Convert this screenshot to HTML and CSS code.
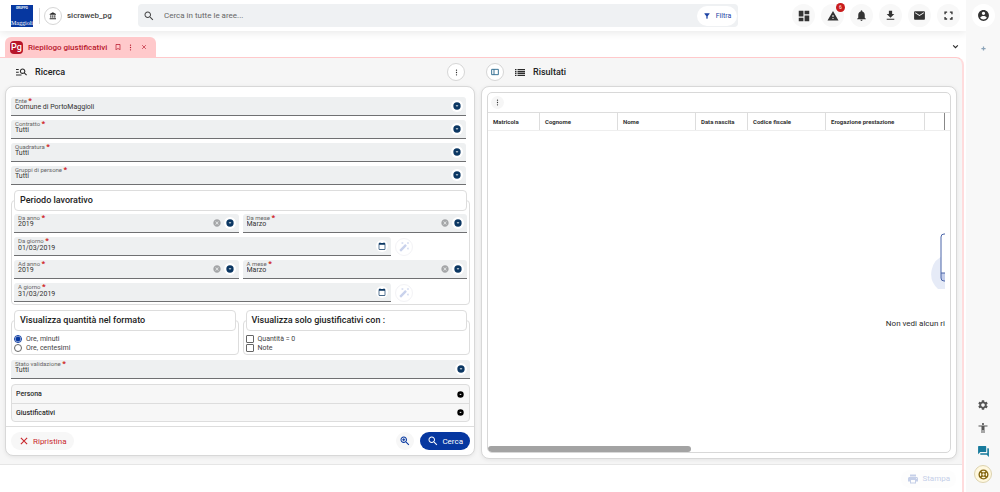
FILE: index.html
```html
<!DOCTYPE html>
<html lang="it">
<head>
<meta charset="utf-8">
<meta name="viewport" content="width=device-width, initial-scale=1">
<title>Riepilogo giustificativi</title>
<link rel="stylesheet" href="styles.css">
</head>
<body>
<svg class="sprite" aria-hidden="true">
  <symbol id="i-search" viewBox="0 0 24 24"><path d="M15.5 14h-.79l-.28-.27C15.41 12.59 16 11.11 16 9.5 16 5.91 13.09 3 9.5 3S3 5.91 3 9.5 5.91 16 9.5 16c1.61 0 3.09-.59 4.23-1.57l.27.28v.79l5 4.99L20.49 19l-4.99-5zm-6 0C7.01 14 5 11.99 5 9.5S7.01 5 9.5 5 14 7.01 14 9.5 11.99 14 9.5 14z"/></symbol>
  <symbol id="i-zoom" viewBox="0 0 24 24"><path d="M15.5 14h-.79l-.28-.27C15.41 12.59 16 11.11 16 9.5 16 5.91 13.09 3 9.5 3S3 5.91 3 9.5 5.91 16 9.5 16c1.61 0 3.09-.59 4.23-1.57l.27.28v.79l5 4.99L20.49 19l-4.99-5zm-6 0C7.01 14 5 11.99 5 9.5S7.01 5 9.5 5 14 7.01 14 9.5 11.99 14 9.5 14zM12.5 10.5h-2v2h-2v-2h-2v-2h2v-2h2v2h2z"/></symbol>
  <symbol id="i-bank" viewBox="0 0 24 24"><path d="M4 10v7h3v-7H4zm6 0v7h3v-7h-3zM2 22h19v-3H2v3zm14-12v7h3v-7h-3zm-4.500-9L2 6v2h19V6l-9.500-5z"/></symbol>
  <symbol id="i-filter" viewBox="0 0 24 24"><path d="M4.250 5.610C6.270 8.200 10 13 10 13v6c0 .55.45 1 1 1h2c.55 0 1-.45 1-1v-6s3.720-4.800 5.740-7.390A1 1 0 0 0 18.950 4H5.040c-.83 0-1.300.95-.79 1.610z"/></symbol>
  <symbol id="i-dashboard" viewBox="0 0 24 24"><path d="M3 13h8V3H3v10zm0 8h8v-6H3v6zm10 0h8V11h-8v10zm0-18v6h8V3h-8z"/></symbol>
  <symbol id="i-warning" viewBox="0 0 24 24"><path d="M1 21h22L12 2 1 21zm12-3h-2v-2h2v2zm0-4h-2v-4h2v4z"/></symbol>
  <symbol id="i-bell" viewBox="0 0 24 24"><path d="M12 22c1.1 0 2-.9 2-2h-4c0 1.1.89 2 2 2zm6-6v-5c0-3.07-1.64-5.64-4.5-6.32V4c0-.83-.67-1.5-1.5-1.5s-1.5.67-1.5 1.5v.68C7.63 5.36 6 7.92 6 11v5l-2 2v1h16v-1l-2-2z"/></symbol>
  <symbol id="i-download" viewBox="0 0 24 24"><path d="M19 9h-4V3H9v6H5l7 7 7-7zM5 18v2h14v-2H5z"/></symbol>
  <symbol id="i-mail" viewBox="0 0 24 24"><path d="M20 4H4c-1.1 0-1.99.9-1.99 2L2 18c0 1.1.9 2 2 2h16c1.1 0 2-.9 2-2V6c0-1.1-.9-2-2-2zm0 4l-8 5-8-5V6l8 5 8-5v2z"/></symbol>
  <symbol id="i-full" viewBox="0 0 24 24"><path d="M6 15H3v6h6v-3H6v-3zM3 9h3V6h3V3H3v6zm15 9h-3v3h6v-6h-3v3zM15 3v3h3v3h3V3h-6z"/></symbol>
  <symbol id="i-account" viewBox="0 0 24 24"><path d="M12 2C6.48 2 2 6.48 2 12s4.48 10 10 10 10-4.48 10-10S17.52 2 12 2zm0 3c1.66 0 3 1.34 3 3s-1.34 3-3 3-3-1.34-3-3 1.34-3 3-3zm0 14.200c-2.500 0-4.710-1.280-6-3.220.03-1.990 4-3.080 6-3.080 1.990 0 5.970 1.090 6 3.080-1.290 1.940-3.500 3.220-6 3.220z"/></symbol>
  <symbol id="i-bookmark" viewBox="0 0 24 24"><path d="M17 3H7c-1.100 0-1.990.9-1.990 2L5 21l7-3 7 3V5c0-1.100-.9-2-2-2zm0 15l-5-2.180L7 18V5h10v13z"/></symbol>
  <symbol id="i-dots" viewBox="0 0 24 24"><circle cx="12" cy="4" r="2.200"/><circle cx="12" cy="12" r="2.200"/><circle cx="12" cy="20" r="2.200"/></symbol>
  <symbol id="i-close" viewBox="0 0 24 24"><path d="M4.500 4.500l15 15m0-15l-15 15" fill="none" stroke="currentColor" stroke-width="2.600"/></symbol>
  <symbol id="i-chevron" viewBox="0 0 24 24"><path d="M4 8l8 8 8-8" fill="none" stroke="currentColor" stroke-width="4"/></symbol>
  <symbol id="i-plus" viewBox="0 0 24 24"><path d="M12 2v20M2 12h20" fill="none" stroke="currentColor" stroke-width="6"/></symbol>
  <symbol id="i-manage" viewBox="0 0 20 20"><path d="M5 5.500H0v-2h5v2zm0 3H0v2h5v-2zm13.590 7l-3.830-3.830c-.8.52-1.740.83-2.760.83-2.760 0-5-2.240-5-5s2.240-5 5-5 5 2.240 5 5c0 1.020-.31 1.960-.83 2.750L20 14.090l-1.410 1.410zM15 7.500c0-1.650-1.350-3-3-3s-3 1.350-3 3 1.350 3 3 3 3-1.350 3-3zM0 15.500h10v-2H0v2z"/></symbol>
  <symbol id="i-list" viewBox="0 0 20 14"><path d="M0 0h3v2.500H0zM5 0h15v2.500H5zM0 3.800h3v2.500H0zM5 3.800h15v2.500H5zM0 7.600h3v2.500H0zM5 7.600h15v2.500H5zM0 11.400h3v2.500H0zM5 11.400h15v2.500H5z"/></symbol>
  <symbol id="i-split" viewBox="0 0 24 24"><path d="M2 4h20v16H2zM9 4v16" fill="none" stroke="currentColor" stroke-width="2.600"/></symbol>
  <symbol id="i-gear" viewBox="0 0 24 24"><path d="M19.140 12.940c.04-.3.06-.61.06-.94 0-.32-.02-.64-.07-.94l2.030-1.580c.18-.14.23-.41.12-.61l-1.920-3.320c-.12-.22-.37-.29-.59-.22l-2.390.96c-.5-.38-1.030-.7-1.620-.94l-.36-2.540c-.04-.24-.24-.41-.48-.41h-3.840c-.24 0-.43.17-.47.41l-.36 2.540c-.59.24-1.130.57-1.620.94l-2.390-.96c-.22-.08-.47 0-.59.22L2.740 8.870c-.12.21-.08.47.12.61l2.030 1.580c-.05.3-.09.63-.09.94s.02.64.07.94l-2.030 1.580c-.18.14-.23.41-.12.61l1.920 3.320c.12.22.37.29.59.22l2.390-.96c.5.38 1.030.7 1.620.94l.36 2.540c.05.24.24.41.48.41h3.840c.24 0 .44-.17.47-.41l.36-2.540c.59-.24 1.130-.56 1.620-.94l2.390.96c.22.08.47 0 .59-.22l1.920-3.320c.12-.22.07-.47-.12-.61l-2.010-1.580zM12 15.600c-1.980 0-3.600-1.620-3.600-3.600s1.620-3.600 3.600-3.600 3.600 1.620 3.600 3.600-1.620 3.600-3.600 3.600z"/></symbol>
  <symbol id="i-person" viewBox="0 0 24 24"><path d="M12 2c1.100 0 2 .9 2 2s-.9 2-2 2-2-.9-2-2 .9-2 2-2zm9 7h-6v13h-2v-6h-2v6H9V9H3V7h18v2z"/></symbol>
  <symbol id="i-forum" viewBox="0 0 24 24"><path d="M21 6h-2v9H6v2c0 .55.45 1 1 1h11l4 4V7c0-.55-.45-1-1-1zm-4 6V3c0-.55-.45-1-1-1H3c-.55 0-1 .45-1 1v14l4-4h10c.55 0 1-.45 1-1z"/></symbol>
  <symbol id="i-help" viewBox="0 0 24 24"><g fill="none" stroke="currentColor"><circle cx="12" cy="12" r="9.500" stroke-width="3"/><circle cx="12" cy="12" r="3.800" stroke-width="2.500"/><path d="M5 5l4.500 4.500M19 5l-4.500 4.500M5 19l4.500-4.500M19 19l-4.500-4.500" stroke-width="4"/></g></symbol>
  <symbol id="i-print" viewBox="0 0 24 24"><path d="M19 8H5c-1.660 0-3 1.340-3 3v6h4v4h12v-4h4v-6c0-1.660-1.340-3-3-3zm-3 11H8v-5h8v5zm3-7c-.55 0-1-.45-1-1s.45-1 1-1 1 .45 1 1-.45 1-1 1zm-1-9H6v4h12V3z"/></symbol>
  <symbol id="i-calendar" viewBox="0 0 24 24"><path d="M20 3h-1V1h-2v2H7V1H5v2H4c-1.100 0-2 .9-2 2v16c0 1.100.9 2 2 2h16c1.100 0 2-.9 2-2V5c0-1.100-.9-2-2-2zm0 18H4V8h16v13z"/></symbol>
  <symbol id="i-wand" viewBox="0 0 24 24"><path d="M7.500 5.600L10 7 8.600 4.500 10 2 7.500 3.400 5 2l1.400 2.500L5 7zm12 9.800L17 14l1.400 2.500L17 19l2.500-1.400L22 19l-1.400-2.500L22 14zM22 2l-2.500 1.400L17 2l1.400 2.500L17 7l2.500-1.400L22 7l-1.400-2.500zm-7.630 5.290c-.39-.39-1.020-.39-1.410 0L1.290 18.960c-.39.39-.39 1.020 0 1.410l2.340 2.340c.39.39 1.020.39 1.410 0L16.700 11.050c.39-.39.39-1.020 0-1.410l-2.330-2.350z"/></symbol>
  <symbol id="i-cancel" viewBox="0 0 24 24"><path d="M12 1C5.900 1 1 5.900 1 12s4.900 11 11 11 11-4.900 11-11S18.100 1 12 1zm5 14.590L15.590 17 12 13.410 8.410 17 7 15.590 10.590 12 7 8.410 8.410 7 12 10.590 15.590 7 17 8.410 13.410 12 17 15.590z"/></symbol>
  <symbol id="i-drop" viewBox="0 0 24 24"><circle cx="12" cy="12" r="11"/><path d="M9 10.500l3 3 3-3z" fill="#fff" stroke="#fff"/></symbol>
</svg>

<div class="app">
  <div class="main">
    <header class="topbar">
      <a class="logo" href="#" aria-label="Maggioli"><span class="logo__group">GRUPPO</span><span class="logo__name">Maggioli</span></a>
      <span class="topbar__rule"></span>
      <button class="round round--line" type="button" aria-label="Ente"><svg class="icon icon--8"><use href="#i-bank"/></svg></button>
      <span class="topbar__user">sicraweb_pg</span>
      <div class="search">
        <svg class="icon icon--12"><use href="#i-search"/></svg>
        <input class="search__input" type="text" placeholder="Cerca in tutte le aree..." aria-label="Cerca in tutte le aree">
        <button class="search__filter" type="button"><svg class="icon icon--8"><use href="#i-filter"/></svg>Filtra</button>
      </div>
      <nav class="tools" aria-label="Strumenti">
        <button class="tool" type="button" aria-label="Dashboard"><svg class="icon icon--14"><use href="#i-dashboard"/></svg></button>
        <button class="tool" type="button" aria-label="Avvisi"><svg class="icon icon--12"><use href="#i-warning"/></svg><span class="tool__badge">6</span></button>
        <button class="tool" type="button" aria-label="Notifiche"><svg class="icon icon--13"><use href="#i-bell"/></svg></button>
        <button class="tool" type="button" aria-label="Download"><svg class="icon icon--13"><use href="#i-download"/></svg></button>
        <button class="tool" type="button" aria-label="Messaggi"><svg class="icon icon--13"><use href="#i-mail"/></svg></button>
        <button class="tool" type="button" aria-label="Schermo intero"><svg class="icon icon--11"><use href="#i-full"/></svg></button>
      </nav>
    </header>

    <div class="tabs">
      <div class="tab">
        <span class="tab__logo">Pg</span>
        <span class="tab__title">Riepilogo giustificativi</span>
        <button class="tab__button" type="button" aria-label="Segnalibro"><svg class="icon icon--8"><use href="#i-bookmark"/></svg></button>
        <button class="tab__button" type="button" aria-label="Altro"><svg class="icon icon--7"><use href="#i-dots"/></svg></button>
        <button class="tab__button" type="button" aria-label="Chiudi"><svg class="icon icon--6"><use href="#i-close"/></svg></button>
      </div>
      <button class="tabs__more" type="button" aria-label="Elenco schede"><svg class="icon icon--7"><use href="#i-chevron"/></svg></button>
    </div>

    <main class="workspace">
      <div class="columns">
        <section class="column">
          <div class="column__head column__head--search">
            <svg class="icon icon--11"><use href="#i-manage"/></svg>
            <h2 class="column__title">Ricerca</h2>
            <button class="round round--line column__menu" type="button" aria-label="Menu ricerca"><svg class="icon icon--7"><use href="#i-dots"/></svg></button>
          </div>
          <form class="card">
            <div class="form">
              <div class="stack stack--inset">
                <div class="field"><div class="field__body"><label class="field__label" for="ente">Ente <b>*</b></label><select class="field__value" id="ente"><option>Comune di PortoMaggioli</option></select></div><span class="field__knob"><svg class="icon icon--8"><use href="#i-drop"/></svg></span></div>
                <div class="field"><div class="field__body"><label class="field__label" for="contratto">Contratto <b>*</b></label><select class="field__value" id="contratto"><option>Tutti</option></select></div><span class="field__knob"><svg class="icon icon--8"><use href="#i-drop"/></svg></span></div>
                <div class="field"><div class="field__body"><label class="field__label" for="quadratura">Quadratura <b>*</b></label><select class="field__value" id="quadratura"><option>Tutti</option></select></div><span class="field__knob"><svg class="icon icon--8"><use href="#i-drop"/></svg></span></div>
                <div class="field"><div class="field__body"><label class="field__label" for="gruppi">Gruppi di persone <b>*</b></label><select class="field__value" id="gruppi"><option>Tutti</option></select></div><span class="field__knob"><svg class="icon icon--8"><use href="#i-drop"/></svg></span></div>
              </div>

              <fieldset class="group">
                <legend class="group__title">Periodo lavorativo</legend>
                <div class="stack">
                  <div class="pair">
                    <div class="field"><div class="field__body"><label class="field__label" for="da-anno">Da anno <b>*</b></label><select class="field__value" id="da-anno"><option>2019</option></select></div><button class="field__clear" type="button" aria-label="Svuota da anno"><svg class="icon icon--8"><use href="#i-cancel"/></svg></button><span class="field__knob"><svg class="icon icon--8"><use href="#i-drop"/></svg></span></div>
                    <div class="field"><div class="field__body"><label class="field__label" for="da-mese">Da mese <b>*</b></label><select class="field__value" id="da-mese"><option>Marzo</option></select></div><button class="field__clear" type="button" aria-label="Svuota da mese"><svg class="icon icon--8"><use href="#i-cancel"/></svg></button><span class="field__knob"><svg class="icon icon--8"><use href="#i-drop"/></svg></span></div>
                  </div>
                  <div class="day">
                    <div class="field"><div class="field__body"><label class="field__label" for="da-giorno">Da giorno <b>*</b></label><input class="field__value" id="da-giorno" type="text" value="01/03/2019"></div><button class="field__knob" type="button" aria-label="Calendario da giorno"><svg class="icon icon--8"><use href="#i-calendar"/></svg></button></div>
                    <button class="wand" type="button" aria-label="Compila da giorno"><svg class="icon icon--11"><use href="#i-wand"/></svg></button>
                  </div>
                  <div class="pair">
                    <div class="field"><div class="field__body"><label class="field__label" for="ad-anno">Ad anno <b>*</b></label><select class="field__value" id="ad-anno"><option>2019</option></select></div><button class="field__clear" type="button" aria-label="Svuota ad anno"><svg class="icon icon--8"><use href="#i-cancel"/></svg></button><span class="field__knob"><svg class="icon icon--8"><use href="#i-drop"/></svg></span></div>
                    <div class="field"><div class="field__body"><label class="field__label" for="a-mese">A mese <b>*</b></label><select class="field__value" id="a-mese"><option>Marzo</option></select></div><button class="field__clear" type="button" aria-label="Svuota a mese"><svg class="icon icon--8"><use href="#i-cancel"/></svg></button><span class="field__knob"><svg class="icon icon--8"><use href="#i-drop"/></svg></span></div>
                  </div>
                  <div class="day">
                    <div class="field"><div class="field__body"><label class="field__label" for="a-giorno">A giorno <b>*</b></label><input class="field__value" id="a-giorno" type="text" value="31/03/2019"></div><button class="field__knob" type="button" aria-label="Calendario a giorno"><svg class="icon icon--8"><use href="#i-calendar"/></svg></button></div>
                    <button class="wand" type="button" aria-label="Compila a giorno"><svg class="icon icon--11"><use href="#i-wand"/></svg></button>
                  </div>
                </div>
              </fieldset>

              <div class="pair">
                <fieldset class="group">
                  <legend class="group__title">Visualizza quantità nel formato</legend>
                  <label class="choice"><input class="choice__box choice__box--radio" type="radio" name="formato" checked>Ore, minuti</label>
                  <label class="choice"><input class="choice__box choice__box--radio" type="radio" name="formato">Ore, centesimi</label>
                </fieldset>
                <fieldset class="group">
                  <legend class="group__title">Visualizza solo giustificativi con :</legend>
                  <label class="choice"><input class="choice__box" type="checkbox">Quantità = 0</label>
                  <label class="choice"><input class="choice__box" type="checkbox">Note</label>
                </fieldset>
              </div>

              <div class="field"><div class="field__body"><label class="field__label" for="stato">Stato validazione <b>*</b></label><select class="field__value" id="stato"><option>Tutti</option></select></div><span class="field__knob"><svg class="icon icon--8"><use href="#i-drop"/></svg></span></div>

              <div class="accordion">
                <button class="accordion__row" type="button" aria-expanded="false">Persona<svg class="icon icon--7"><use href="#i-drop"/></svg></button>
                <button class="accordion__row" type="button" aria-expanded="false">Giustificativi<svg class="icon icon--7"><use href="#i-drop"/></svg></button>
              </div>
            </div>
            <div class="actions">
              <button class="pill pill--reset" type="reset"><svg class="icon icon--10"><use href="#i-close"/></svg>Ripristina</button>
              <button class="pill pill--zoom" type="button" aria-label="Ricerca avanzata"><svg class="icon icon--12"><use href="#i-zoom"/></svg></button>
              <button class="pill pill--primary" type="button"><svg class="icon icon--12"><use href="#i-search"/></svg>Cerca</button>
            </div>
          </form>
        </section>

        <section class="column">
          <div class="column__head">
            <button class="round round--line" type="button" aria-label="Affianca"><svg class="icon icon--8 icon--teal"><use href="#i-split"/></svg></button>
            <svg class="icon icon--list"><use href="#i-list"/></svg>
            <h2 class="column__title">Risultati</h2>
          </div>
          <div class="card card--results">
            <div class="results">
              <div class="results__bar"><button class="results__menu" type="button" aria-label="Menu risultati"><svg class="icon icon--7"><use href="#i-dots"/></svg></button></div>
              <div class="results__head">
                <table class="grid">
                  <colgroup><col class="grid__52"><col class="grid__78"><col class="grid__78"><col class="grid__52"><col class="grid__78"><col class="grid__99"><col class="grid__20"></colgroup>
                  <thead><tr><th>Matricola</th><th>Cognome</th><th>Nome</th><th>Data nascita</th><th>Codice fiscale</th><th>Erogazione prestazione</th><th></th></tr></thead>
                </table>
              </div>
              <div class="results__body">
                <div class="empty">
                  <svg class="empty__art" viewBox="0 0 14 64" aria-hidden="true"><path d="M14 26A20 20 0 0 0 7 60H14z" fill="#e6ebf7"/><path d="M14 5H12Q10 5 10 8V49Q10 52 13 52H14" fill="#fff"/><path d="M10 44h4v8h-1q-3 0-3-3z" fill="#c3cdea"/><path d="M14 5H13Q10 5 10 8V49Q10 52 13 52H14M10 44h4" fill="none" stroke="#4a64a8"/></svg>
                  <p class="empty__text">Non vedi alcun ri</p>
                </div>
              </div>
              <div class="results__scroll"><span class="results__thumb"></span></div>
            </div>
          </div>
        </section>
      </div>
      <footer class="bottom">
        <button class="pill pill--print" type="button" disabled><svg class="icon icon--12"><use href="#i-print"/></svg>Stampa</button>
      </footer>
    </main>
  </div>

  <aside class="rail">
    <button class="rail__account" type="button" aria-label="Account"><svg class="icon icon--13"><use href="#i-account"/></svg></button>
    <button class="rail__add" type="button" aria-label="Aggiungi"><svg class="icon icon--5"><use href="#i-plus"/></svg></button>
    <div class="rail__bottom">
      <button class="rail__button" type="button" aria-label="Impostazioni"><svg class="icon icon--12"><use href="#i-gear"/></svg></button>
      <button class="rail__button" type="button" aria-label="Accessibilità"><svg class="icon icon--12"><use href="#i-person"/></svg></button>
      <button class="rail__button rail__button--chat" type="button" aria-label="Chat"><svg class="icon icon--13"><use href="#i-forum"/></svg></button>
      <button class="rail__button rail__button--help" type="button" aria-label="Assistenza"><svg class="icon icon--11"><use href="#i-help"/></svg></button>
    </div>
  </aside>
</div>
</body>
</html>
```

FILE: styles.css
```css
*, *::before, *::after { box-sizing: border-box; }

body {
  margin: 0;
  background: #fff;
  color: #2b2b2b;
  font-family: Roboto, "Liberation Sans", sans-serif;
  font-size: 8px;
}

button, input, select {
  margin: 0;
  padding: 0;
  border: 0;
  background: none;
  color: inherit;
  font: inherit;
}

button { display: flex; align-items: center; justify-content: center; cursor: pointer; }

.sprite { display: none; }

.icon { display: block; flex: none; fill: currentColor; }
.icon--5 { width: 5px; height: 5px; }
.icon--6 { width: 6px; height: 6px; }
.icon--7 { width: 7px; height: 7px; }
.icon--8 { width: 8px; height: 8px; }
.icon--10 { width: 10px; height: 10px; }
.icon--11 { width: 11px; height: 11px; }
.icon--12 { width: 12px; height: 12px; }
.icon--13 { width: 13px; height: 13px; }
.icon--14 { width: 14px; height: 14px; }
.icon--list { width: 10px; height: 7px; }
.icon--teal { color: #1d5f86; }

.app { display: flex; min-height: 100vh; }
.main { flex: 1; min-width: 0; display: flex; flex-direction: column; }

/* Top bar */
.topbar {
  display: flex;
  align-items: center;
  height: 31px;
  padding: 0 6px 0 11px;
  box-shadow: 0 2px 8px rgba(0, 0, 0, .09);
}
.logo {
  display: flex;
  flex-direction: column;
  align-items: center;
  justify-content: space-between;
  width: 22px;
  height: 22px;
  padding-top: 1px;
  background: #0637a0;
  color: #fff;
  text-decoration: none;
  overflow: hidden;
}
.logo__group { font-size: 3px; line-height: 4px; font-weight: 700; }
.logo__name { font: 6px/7px "Liberation Serif", serif; }
.topbar__rule { width: 1px; height: 16px; margin: 0 4px 0 6px; background: #ddd; }
.round { width: 18px; height: 18px; flex: none; border-radius: 50%; }
.round--line { border: 1px solid #d6d6d6; background: #fff; }
.topbar__user { width: 76px; padding-left: 5px; font-weight: 500; color: #444; }
.search {
  flex: 1;
  display: flex;
  align-items: center;
  height: 23px;
  max-width: 600px;
  padding: 0 1px 0 5px;
  border-radius: 4px;
  background: #eff1f3;
  color: #444;
}
.search__input { flex: 1; min-width: 0; height: 20px; padding-left: 9px; outline: 0; }
.search__input::placeholder { color: #666; opacity: 1; }
.search__filter {
  gap: 5px;
  width: 40px;
  height: 20px;
  border-radius: 10px;
  background: #fff;
  color: #1f45a5;
  font-size: 7px;
}
.tools { display: flex; gap: 6px; margin-left: auto; }
.tool { position: relative; width: 23px; height: 23px; border-radius: 50%; background: #f8f8f8; color: #333; }
.tool__badge {
  position: absolute;
  top: -1px;
  right: -1px;
  width: 9px;
  height: 9px;
  border-radius: 50%;
  background: #c91c1c;
  color: #fff;
  font-size: 5px;
  line-height: 9px;
  text-align: center;
}

/* Tabs */
.tabs { display: flex; align-items: flex-end; justify-content: space-between; height: 26px; padding: 0 5px; }
.tab {
  display: flex;
  align-items: center;
  height: 20px;
  padding: 0 6px 0 5px;
  border-radius: 6px 6px 0 0;
  background: #ffc9cb;
  color: #b8172b;
}
.tab__logo {
  width: 13px;
  height: 13px;
  border-radius: 4px;
  background: #b8142a;
  color: #fff;
  font-size: 9px;
  font-weight: 500;
  line-height: 12px;
  text-align: center;
}
.tab__title { margin: 0 4px 0 5px; font-weight: 500; }
.tab__button { width: 13px; height: 13px; }
.tabs__more { width: 11px; height: 22px; }

/* Workspace */
.workspace {
  flex: 1;
  display: flex;
  flex-direction: column;
  margin-right: 2px;
  border-top: 1px solid #ffc9cb;
  border-right: 2px solid #ffdcdd;
  border-top-right-radius: 8px;
  background: #f6f6f6;
}
.columns {
  flex: 1;
  display: grid;
  grid-template-columns: minmax(0, 470fr) minmax(0, 476fr);
  gap: 6px;
  padding: 0 5px 5px;
}
.column { display: flex; flex-direction: column; }
.column__head { display: flex; align-items: center; height: 28px; padding: 0 10px 0 5px; }
.column__head--search { padding-left: 11px; }
.column__title { margin: 0 0 0 8px; font-size: 9px; font-weight: 500; color: #222; }
.column__menu { margin-left: auto; }
.icon--list { margin-left: 11px; }

.card {
  border: 1px solid #d8d8d8;
  border-radius: 8px;
  background: #fff;
  box-shadow: 0 1px 4px rgba(0, 0, 0, .08);
}
.card--results { flex: 1; display: flex; padding: 5px; }

.form { display: flex; flex-direction: column; gap: 5px; padding: 10px 4px 4px 5px; }
.stack { display: flex; flex-direction: column; gap: 4px; }
.stack--inset { padding-right: 4px; }
.pair { display: grid; grid-template-columns: 1fr 1fr; gap: 4px; }
.day { display: flex; align-items: center; gap: 4px; padding-right: 54px; }
.day .field { flex: 1; }

.field {
  display: flex;
  align-items: center;
  height: 19px;
  padding: 0 3px 0 4px;
  border-bottom: 1px solid #6f7072;
  border-radius: 3px 3px 0 0;
  background: #eef0f1;
}
.field__body { flex: 1; min-width: 0; align-self: flex-start; padding-top: 1px; }
.field__label { display: block; height: 6px; font-size: 6px; line-height: 6px; color: #666; }
.field__label b { font-size: 8px; line-height: 1px; color: #cf2020; }
.field__value {
  display: block;
  width: 100%;
  height: 7px;
  font-size: 7px;
  line-height: 7px;
  color: #333;
  appearance: none;
  outline: 0;
}
.field__clear { width: 12px; height: 12px; margin-right: 1px; color: #a3a5a7; }
.field__knob {
  display: flex;
  align-items: center;
  justify-content: center;
  width: 12px;
  height: 12px;
  border-radius: 50%;
  background: #fff;
  color: #0b3763;
}
.wand { width: 18px; height: 18px; border: 1px solid #f3f3f6; border-radius: 50%; color: #c9d2ec; }

.group { min-width: 0; margin: 0; padding: 3px 2px 2px; border: 1px solid #ddd; border-radius: 4px; }
.group__title {
  width: 100%;
  height: 21px;
  padding: 0 5px;
  border: 1px solid #ddd;
  border-radius: 4px;
  background: #fff;
  font-size: 9px;
  font-weight: 500;
  line-height: 19px;
  color: #222;
}
.choice { display: flex; align-items: center; gap: 4px; height: 9px; font-size: 7px; color: #444; }
.choice__box {
  width: 8px;
  height: 8px;
  border: 1px solid #666;
  border-radius: 1px;
  background: #fff;
  appearance: none;
}
.choice__box--radio { border-radius: 50%; }
.choice__box--radio:checked {
  border-color: #0637a0;
  background: radial-gradient(circle, #0637a0 0 2px, #fff 3px);
}

.accordion { border: 1px solid #ddd; border-radius: 4px; background: #f7f7f7; }
.accordion__row {
  width: 100%;
  height: 18px;
  padding: 0 5px 0 4px;
  justify-content: space-between;
  font-size: 7px;
  font-weight: 500;
}
.accordion__row .icon { color: #000; }
.accordion__row + .accordion__row { border-top: 1px solid #ddd; }

.actions { display: flex; align-items: center; gap: 6px; padding: 5px 4px 5px 5px; border-top: 1px solid #ddd; }
.pill { gap: 4px; height: 18px; border-radius: 9px; }
.pill--reset { margin-right: auto; padding: 0 8px; background: #f7f7f7; color: #c9282d; }
.pill--zoom { width: 18px; background: #f7f7f7; color: #0637a0; }
.pill--primary { gap: 3px; padding: 0 7px; background: #0637a0; color: #fff; }
.pill--print { gap: 3px; padding: 0 6px; background: #fdfdfd; color: #c5cfe8; }

/* Results */
.results {
  flex: 1;
  min-width: 0;
  display: flex;
  flex-direction: column;
  border: 1px solid #d8d8d8;
  border-radius: 5px;
  overflow: hidden;
}
.results__bar { display: flex; align-items: center; height: 20px; padding-left: 3px; border-bottom: 1px solid #ddd; }
.results__menu { width: 13px; height: 13px; border-radius: 50%; background: #f6f6f6; color: #333; }
.results__head { padding-right: 5px; border-bottom: 1px solid #eee; }
.grid { width: 100%; table-layout: fixed; border-collapse: separate; border-spacing: 0; }
.grid__20 { width: 20px; }
.grid__52 { width: 52px; }
.grid__78 { width: 78px; }
.grid__99 { width: 99px; }
.grid th {
  height: 17px;
  padding: 0 0 0 5px;
  border-right: 1px solid #ddd;
  font-size: 6px;
  font-weight: 700;
  text-align: left;
  white-space: nowrap;
  color: #333;
}
.grid th:last-child { border-right-color: #888; }
.results__body { flex: 1; display: flex; flex-direction: column; justify-content: center; padding-right: 5px; }
.empty { display: flex; flex-direction: column; align-items: flex-end; gap: 26px; padding-bottom: 20px; }
.empty__art { display: block; width: 14px; height: 64px; }
.empty__text { margin: 0; line-height: 10px; white-space: nowrap; }
.results__scroll { height: 6px; }
.results__thumb { display: block; width: 44%; height: 6px; border-radius: 3px; background: #a3a3a3; }

/* Footer */
.bottom {
  display: flex;
  align-items: center;
  justify-content: flex-end;
  height: 28px;
  padding-right: 6px;
  border-top: 1px solid #e6e6e6;
  background: #fff;
}

/* Right rail */
.rail { display: flex; flex-direction: column; align-items: center; width: 34px; padding: 4px 0 9px; background: #f8f8f8; }
.rail__account { width: 23px; height: 23px; border-radius: 50%; background: #fff; color: #333; }
.rail__add { width: 18px; height: 18px; margin-top: 12px; color: #8ba3b8; }
.rail__bottom { display: flex; flex-direction: column; gap: 5px; margin-top: auto; }
.rail__button { width: 18px; height: 18px; border-radius: 50%; color: #555; }
.rail__button--chat { color: #167a9c; }
.rail__button--help { border: 1px solid #ddd3b0; background: #fff8df; color: #84650f; }
```
